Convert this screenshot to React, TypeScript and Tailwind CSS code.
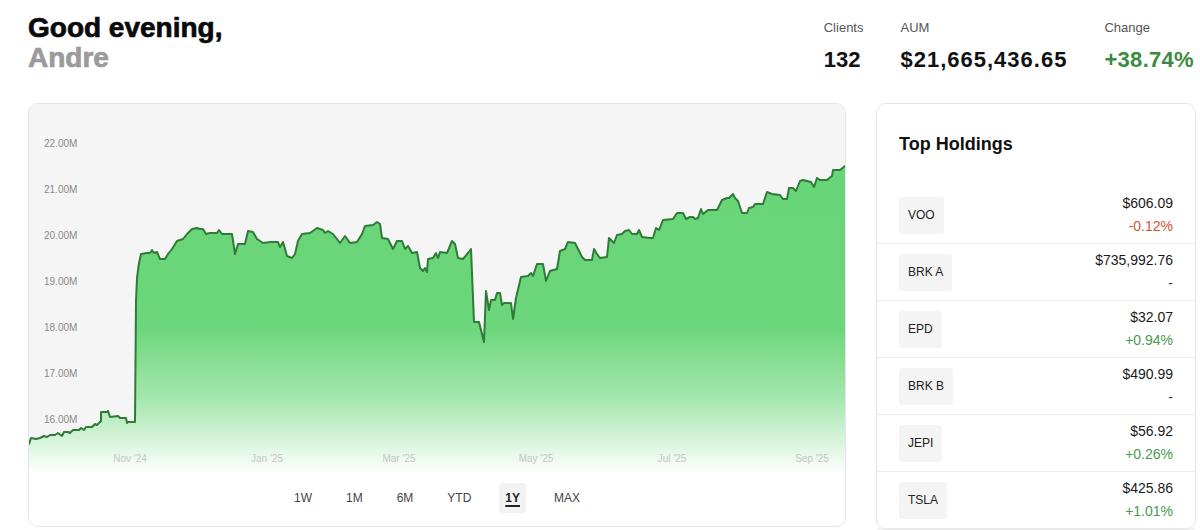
import React from 'react';

// chart points, in page coordinates (x,y) as read from the screenshot
const RAW = `29,443 31,437 36,438 40,437 44,435 47,436 50,434 55,434 58,432 62,435 64,431 68,431 70,432 73,429 79,429 81,427 84,429 86,426 92,426 95,423 97,424 99,422 101,420 101,411 107,411 108,410 110,416 118,415 120,417 126,417 127,422 128,421 134,421 135,421 136,300 137,277 139,262 141,253 147,252 150,252 152,249 154,252 157,251 160,258 165,258 168,253 172,248 177,240 183,238 187,233 192,228 197,227 200,228 203,228 206,233 210,232 217,232 219,229 222,233 232,233 235,253 238,243 245,243 248,230 253,231 257,238 263,242 270,241 278,241 280,246 283,241 287,255 292,257 295,253 298,240 302,233 310,232 317,227 323,229 325,232 328,230 333,233 340,242 345,235 350,242 357,241 362,233 365,225 373,224 377,221 380,223 382,237 388,238 393,248 397,240 402,240 405,248 408,245 412,252 417,251 420,267 423,270 425,267 427,271 428,258 433,257 436,252 438,257 440,251 447,252 452,240 455,243 458,257 463,258 468,252 471,248 474,321 479,321 484,341 486,290 489,309 491,299 495,299 497,292 500,292 502,304 504,302 511,302 513,318 516,297 521,276 528,275 531,272 533,275 537,263 543,263 546,280 550,270 557,268 560,250 565,248 568,241 575,242 578,248 582,256 585,259 592,259 594,248 597,253 600,257 607,256 609,237 614,242 617,234 622,233 625,230 629,229 632,233 637,233 639,229 642,236 650,237 653,237 656,227 659,229 663,219 673,218 677,212 683,212 686,218 690,216 693,216 695,218 698,217 701,208 703,213 708,209 717,209 722,199 727,197 729,197 733,193 735,197 738,200 742,212 747,212 749,207 753,206 755,203 758,203 763,203 767,191 772,193 780,194 783,198 787,198 789,187 793,187 796,190 800,180 803,179 811,181 814,186 817,177 820,179 827,179 832,175 833,169 840,169 845,165`;

const pts = RAW.trim()
  .split(/\s+/)
  .map((p) => {
    const [x, y] = p.split(',').map(Number);
    return [x - 29, y - 103];
  });

const linePath = pts.map(([x, y], i) => `${i ? 'L' : 'M'}${x},${y}`).join(' ');
const areaPath = `${linePath} L817,${pts[pts.length - 1][1]} L817,370 L0,370 Z`;

const yLabels = ['22.00M', '21.00M', '20.00M', '19.00M', '18.00M', '17.00M', '16.00M'];
const xLabels: [string, number][] = [
  ["Nov '24", 130],
  ["Jan '25", 267],
  ["Mar '25", 399],
  ["May '25", 536],
  ["Jul '25", 672],
  ["Sep '25", 812],
];

const ranges = ['1W', '1M', '6M', 'YTD', '1Y', 'MAX'];

const holdings = [
  { ticker: 'VOO', price: '$606.09', change: '-0.12%', tone: 'down' },
  { ticker: 'BRK A', price: '$735,992.76', change: '-', tone: 'flat' },
  { ticker: 'EPD', price: '$32.07', change: '+0.94%', tone: 'up' },
  { ticker: 'BRK B', price: '$490.99', change: '-', tone: 'flat' },
  { ticker: 'JEPI', price: '$56.92', change: '+0.26%', tone: 'up' },
  { ticker: 'TSLA', price: '$425.86', change: '+1.01%', tone: 'up' },
];

const Stat = ({ label, value, className }: { label: string; value: string; className?: string }) => (
  <div className="flex flex-col">
    <span className="text-[13px] leading-[20px] text-[#555]">{label}</span>
    <span className={`mt-[8px] text-[22px] leading-[28px] font-bold ${className ?? 'text-[#111]'}`}>{value}</span>
  </div>
);

const Chart = () => (
  <svg viewBox="0 0 816 370" preserveAspectRatio="none" className="block w-full h-full">
    <defs>
      <linearGradient id="fillGrad" x1="0" y1="0" x2="0" y2="370" gradientUnits="userSpaceOnUse">
        <stop offset="0" stopColor="#67d577" />
        <stop offset="0.6" stopColor="#6bd67a" />
        <stop offset="0.8" stopColor="#a6e7af" />
        <stop offset="1" stopColor="#ffffff" />
      </linearGradient>
    </defs>
    <path d={areaPath} fill="url(#fillGrad)" />
    <path d={linePath} fill="none" stroke="#2f7b37" strokeWidth={2} strokeLinejoin="round" strokeLinecap="round" />
    {yLabels.map((l, i) => (
      <text key={l} x={15} y={40.5 + i * 46} fontSize={10} fill="#8a8a8a" dominantBaseline="middle">
        {l}
      </text>
    ))}
    {xLabels.map(([l, x]) => (
      <text key={l} x={x - 29} y={355} fontSize={10} fill="#c6c6c6" textAnchor="middle" dominantBaseline="middle">
        {l}
      </text>
    ))}
  </svg>
);

export default function App() {
  return (
    <div className="min-h-screen bg-white pl-[28px] pr-[4px] pt-[13px] font-['Liberation_Sans',Arial,sans-serif] text-[#111]">
      {/* header */}
      <div className="flex items-start justify-between">
        <h1 className="text-[28px] leading-[30px] font-bold [-webkit-text-stroke:0.7px_currentColor]">
          <span className="block text-[#0a0a0a]">Good evening,</span>
          <span className="block text-[#9b9b9b]">Andre</span>
        </h1>
        <div className="mt-[5px] mr-[2px] flex gap-[37px]">
          <Stat label="Clients" value="132" />
          <Stat label="AUM" value="$21,665,436.65" className="text-[#111] tracking-[1px]" />
          <Stat label="Change" value="+38.74%" className="text-[#3b8a40] tracking-[0.3px]" />
        </div>
      </div>

      {/* cards */}
      <div className="mt-[29px] flex items-start gap-[30px]">
        <div className="flex-1 overflow-hidden rounded-[10px] border border-[#e6e6e6] bg-white">
          <div className="h-[370px] bg-[#f5f5f5]">
            <Chart />
          </div>
          <div className="flex h-[52px] items-start justify-center gap-[22px] pt-[9px]">
            {ranges.map((r) => (
              <button
                key={r}
                className={`h-[30px] rounded-[4px] px-[6px] text-[12px] ${
                  r === '1Y'
                    ? 'bg-[#f2f2f2] font-bold text-[#222] underline decoration-[1.5px] underline-offset-[3px]'
                    : 'text-[#444]'
                }`}
              >
                {r}
              </button>
            ))}
          </div>
        </div>

        <div className="w-[320px] rounded-[10px] border border-[#e6e6e6] bg-white">
          <h2 className="px-[22px] pt-[26px] text-[18px] leading-[28px] font-bold text-[#111]">Top Holdings</h2>
          <div className="mt-[29px]">
            {holdings.map((h) => (
              <div key={h.ticker} className="flex h-[57px] items-center justify-between border-b border-[#ececec] px-[22px]">
                <div className="flex h-[37px] items-center rounded-[3px] bg-[#f4f4f4] px-[9px] text-[12px] text-[#222]">
                  {h.ticker}
                </div>
                <div className="flex flex-col items-end text-[14px] leading-[23px]">
                  <span className="text-[#1a1a1a]">{h.price}</span>
                  <span
                    className={
                      h.tone === 'down' ? 'text-[#d2553a]' : h.tone === 'up' ? 'text-[#4a9a50]' : 'text-[#333]'
                    }
                  >
                    {h.change}
                  </span>
                </div>
              </div>
            ))}
          </div>
        </div>
      </div>
    </div>
  );
}
